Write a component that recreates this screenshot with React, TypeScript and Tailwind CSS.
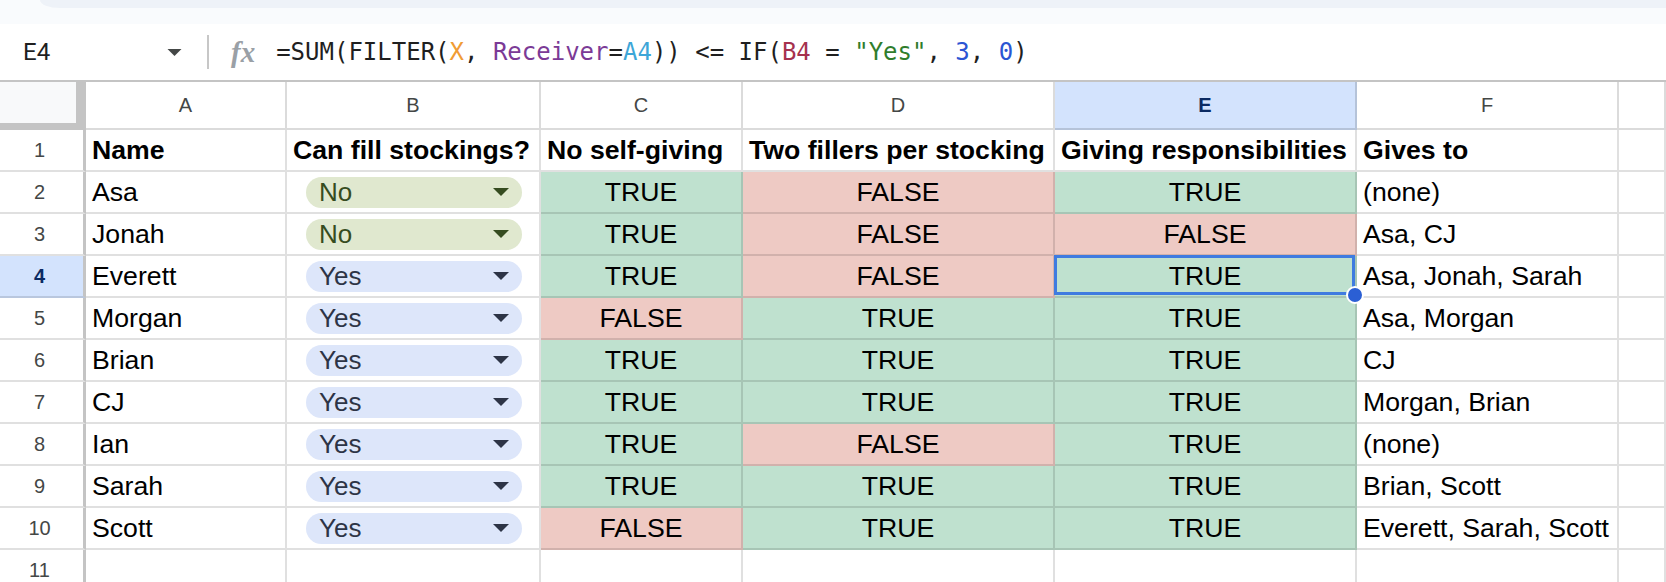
import clsx from "clsx";

type Row = {
  name: string;
  can: "Yes" | "No";
  c: boolean;
  d: boolean;
  e: boolean;
  gives: string;
};

const rows: Row[] = [
  { name: "Asa", can: "No", c: true, d: false, e: true, gives: "(none)" },
  { name: "Jonah", can: "No", c: true, d: false, e: false, gives: "Asa, CJ" },
  { name: "Everett", can: "Yes", c: true, d: false, e: true, gives: "Asa, Jonah, Sarah" },
  { name: "Morgan", can: "Yes", c: false, d: true, e: true, gives: "Asa, Morgan" },
  { name: "Brian", can: "Yes", c: true, d: true, e: true, gives: "CJ" },
  { name: "CJ", can: "Yes", c: true, d: true, e: true, gives: "Morgan, Brian" },
  { name: "Ian", can: "Yes", c: true, d: false, e: true, gives: "(none)" },
  { name: "Sarah", can: "Yes", c: true, d: true, e: true, gives: "Brian, Scott" },
  { name: "Scott", can: "Yes", c: false, d: true, e: true, gives: "Everett, Sarah, Scott" },
];

const cellFont = { fontFamily: '"Liberation Sans", Arial, sans-serif' };

function Caret({ className }: { className?: string }) {
  return (
    <svg width="16" height="8" viewBox="0 0 16 8" className={className}>
      <path d="M0 0h16L8 8z" fill="currentColor" />
    </svg>
  );
}

function Cell({
  children,
  className,
}: {
  children?: React.ReactNode;
  className?: string;
}) {
  return (
    <div
      className={clsx(
        "h-[42px] border-r-2 border-b-2 border-black/[0.12] flex items-center text-[26.67px] text-black overflow-hidden whitespace-nowrap",
        className
      )}
    >
      {children}
    </div>
  );
}

function BoolCell({ value, selected }: { value: boolean; selected?: boolean }) {
  return (
    <Cell
      className={clsx(
        "justify-center",
        value ? "bg-[#bfe1cf]" : "bg-[#eecac4]",
        selected && "relative z-10 overflow-visible"
      )}
    >
      {value ? "TRUE" : "FALSE"}
      {selected && (
        <>
          <span className="absolute -left-px -top-px right-0 bottom-px border-[3px] border-[#3f7be0]" />
          <span className="absolute -right-[9px] -bottom-[8px] w-[18px] h-[18px] rounded-full bg-[#2b5fd4] border-2 border-white" />
        </>
      )}
    </Cell>
  );
}

function Chip({ value }: { value: "Yes" | "No" }) {
  const yes = value === "Yes";
  return (
    <div
      className={clsx(
        "ml-[19px] mr-[17px] flex-1 h-[31px] rounded-full flex items-center justify-between pl-[13px] pr-[13px] text-[26px]",
        yes ? "bg-[#dde6fa] text-[#2d3446]" : "bg-[#e0e8cf] text-[#364c20]"
      )}
    >
      <span>{value}</span>
      <Caret />
    </div>
  );
}

function RowHeader({ n, active }: { n: number; active?: boolean }) {
  return (
    <div
      className={clsx(
        "h-[42px] pr-[4px] border-r-[3px] border-r-[#c4c4c4] border-b-2 border-b-black/[0.12] flex items-center justify-center text-[20px]",
        active ? "bg-[#d3e3fd] text-[#0b2a62] font-bold" : "bg-white text-[#444746]"
      )}
    >
      {n}
    </div>
  );
}

function ColHeader({ label, active }: { label: string; active?: boolean }) {
  return (
    <div
      className={clsx(
        "h-[48px] border-r-2 border-b-2 border-black/[0.14] flex items-center justify-center text-[20px]",
        active ? "bg-[#d3e3fd] text-[#0b2a62] font-bold" : "bg-white text-[#444746]"
      )}
    >
      {label}
    </div>
  );
}

function FormulaBar() {
  return (
    <div className="h-[58px] bg-white flex items-center border-b-2 border-[#c4c4c4]">
      <span
        className="ml-[23px] w-[144px] text-[24px] text-[#1f1f1f]"
        style={{ fontFamily: "Roboto, sans-serif" }}
      >
        E4
      </span>
      <Caret className="text-[#444746] w-[15px] h-[7px]" />
      <span className="ml-[25px] w-[2px] h-[34px] bg-[#c7c7c7]" />
      <span
        className="ml-[22px] text-[29px] italic font-bold text-[#9aa0a6] leading-none"
        style={{ fontFamily: '"Liberation Serif", serif' }}
      >
        fx
      </span>
      <span
        className="ml-[21px] text-[24px] text-[#1f1f1f] whitespace-pre"
        style={{ fontFamily: '"DejaVu Sans Mono", monospace' }}
      >
        =SUM(FILTER(<span className="text-[#f09c34]">X</span>,{" "}
        <span className="text-[#7b3a96]">Receiver</span>=
        <span className="text-[#3da6d8]">A4</span>)) &lt;= IF(
        <span className="text-[#a5314e]">B4</span> ={" "}
        <span className="text-[#2f7d2c]">"Yes"</span>,{" "}
        <span className="text-[#2b55d3]">3</span>,{" "}
        <span className="text-[#2b55d3]">0</span>)
      </span>
    </div>
  );
}

export default function App() {
  return (
    <div className="w-[1666px] h-[582px] overflow-hidden bg-white" style={cellFont}>
      {/* top chrome */}
      <div className="h-[24px] bg-[#f9fbfd]">
        <div className="ml-[40px] h-[8px] bg-[#eef2f8] rounded-bl-[20px_8px]" />
      </div>

      <FormulaBar />

      <div className="grid grid-cols-[86px_201px_254px_202px_312px_302px_262px_1fr]">
        {/* corner */}
        <div className="h-[48px] bg-[#f8f9fa] border-r-[10px] border-b-[7px] border-[#c4c4c4]" />
        {["A", "B", "C", "D", "E", "F", ""].map((l) => (
          <ColHeader key={l || "G"} label={l} active={l === "E"} />
        ))}

        {/* header row */}
        <RowHeader n={1} />
        <Cell className="pl-[6px] font-bold">Name</Cell>
        <Cell className="pl-[6px] font-bold">Can fill stockings?</Cell>
        <Cell className="pl-[6px] font-bold">No self-giving</Cell>
        <Cell className="pl-[6px] font-bold">Two fillers per stocking</Cell>
        <Cell className="pl-[6px] font-bold">Giving responsibilities</Cell>
        <Cell className="pl-[6px] font-bold">Gives to</Cell>
        <Cell />

        {rows.map((r, i) => (
          <div key={r.name} className="contents">
            <RowHeader n={i + 2} active={i === 2} />
            <Cell className="pl-[6px]">{r.name}</Cell>
            <Cell>
              <Chip value={r.can} />
            </Cell>
            <BoolCell value={r.c} />
            <BoolCell value={r.d} />
            <BoolCell value={r.e} selected={i === 2} />
            <Cell className="pl-[6px]">{r.gives}</Cell>
            <Cell />
          </div>
        ))}

        <RowHeader n={11} />
        <Cell />
        <Cell />
        <Cell />
        <Cell />
        <Cell />
        <Cell />
        <Cell />
      </div>
    </div>
  );
}
